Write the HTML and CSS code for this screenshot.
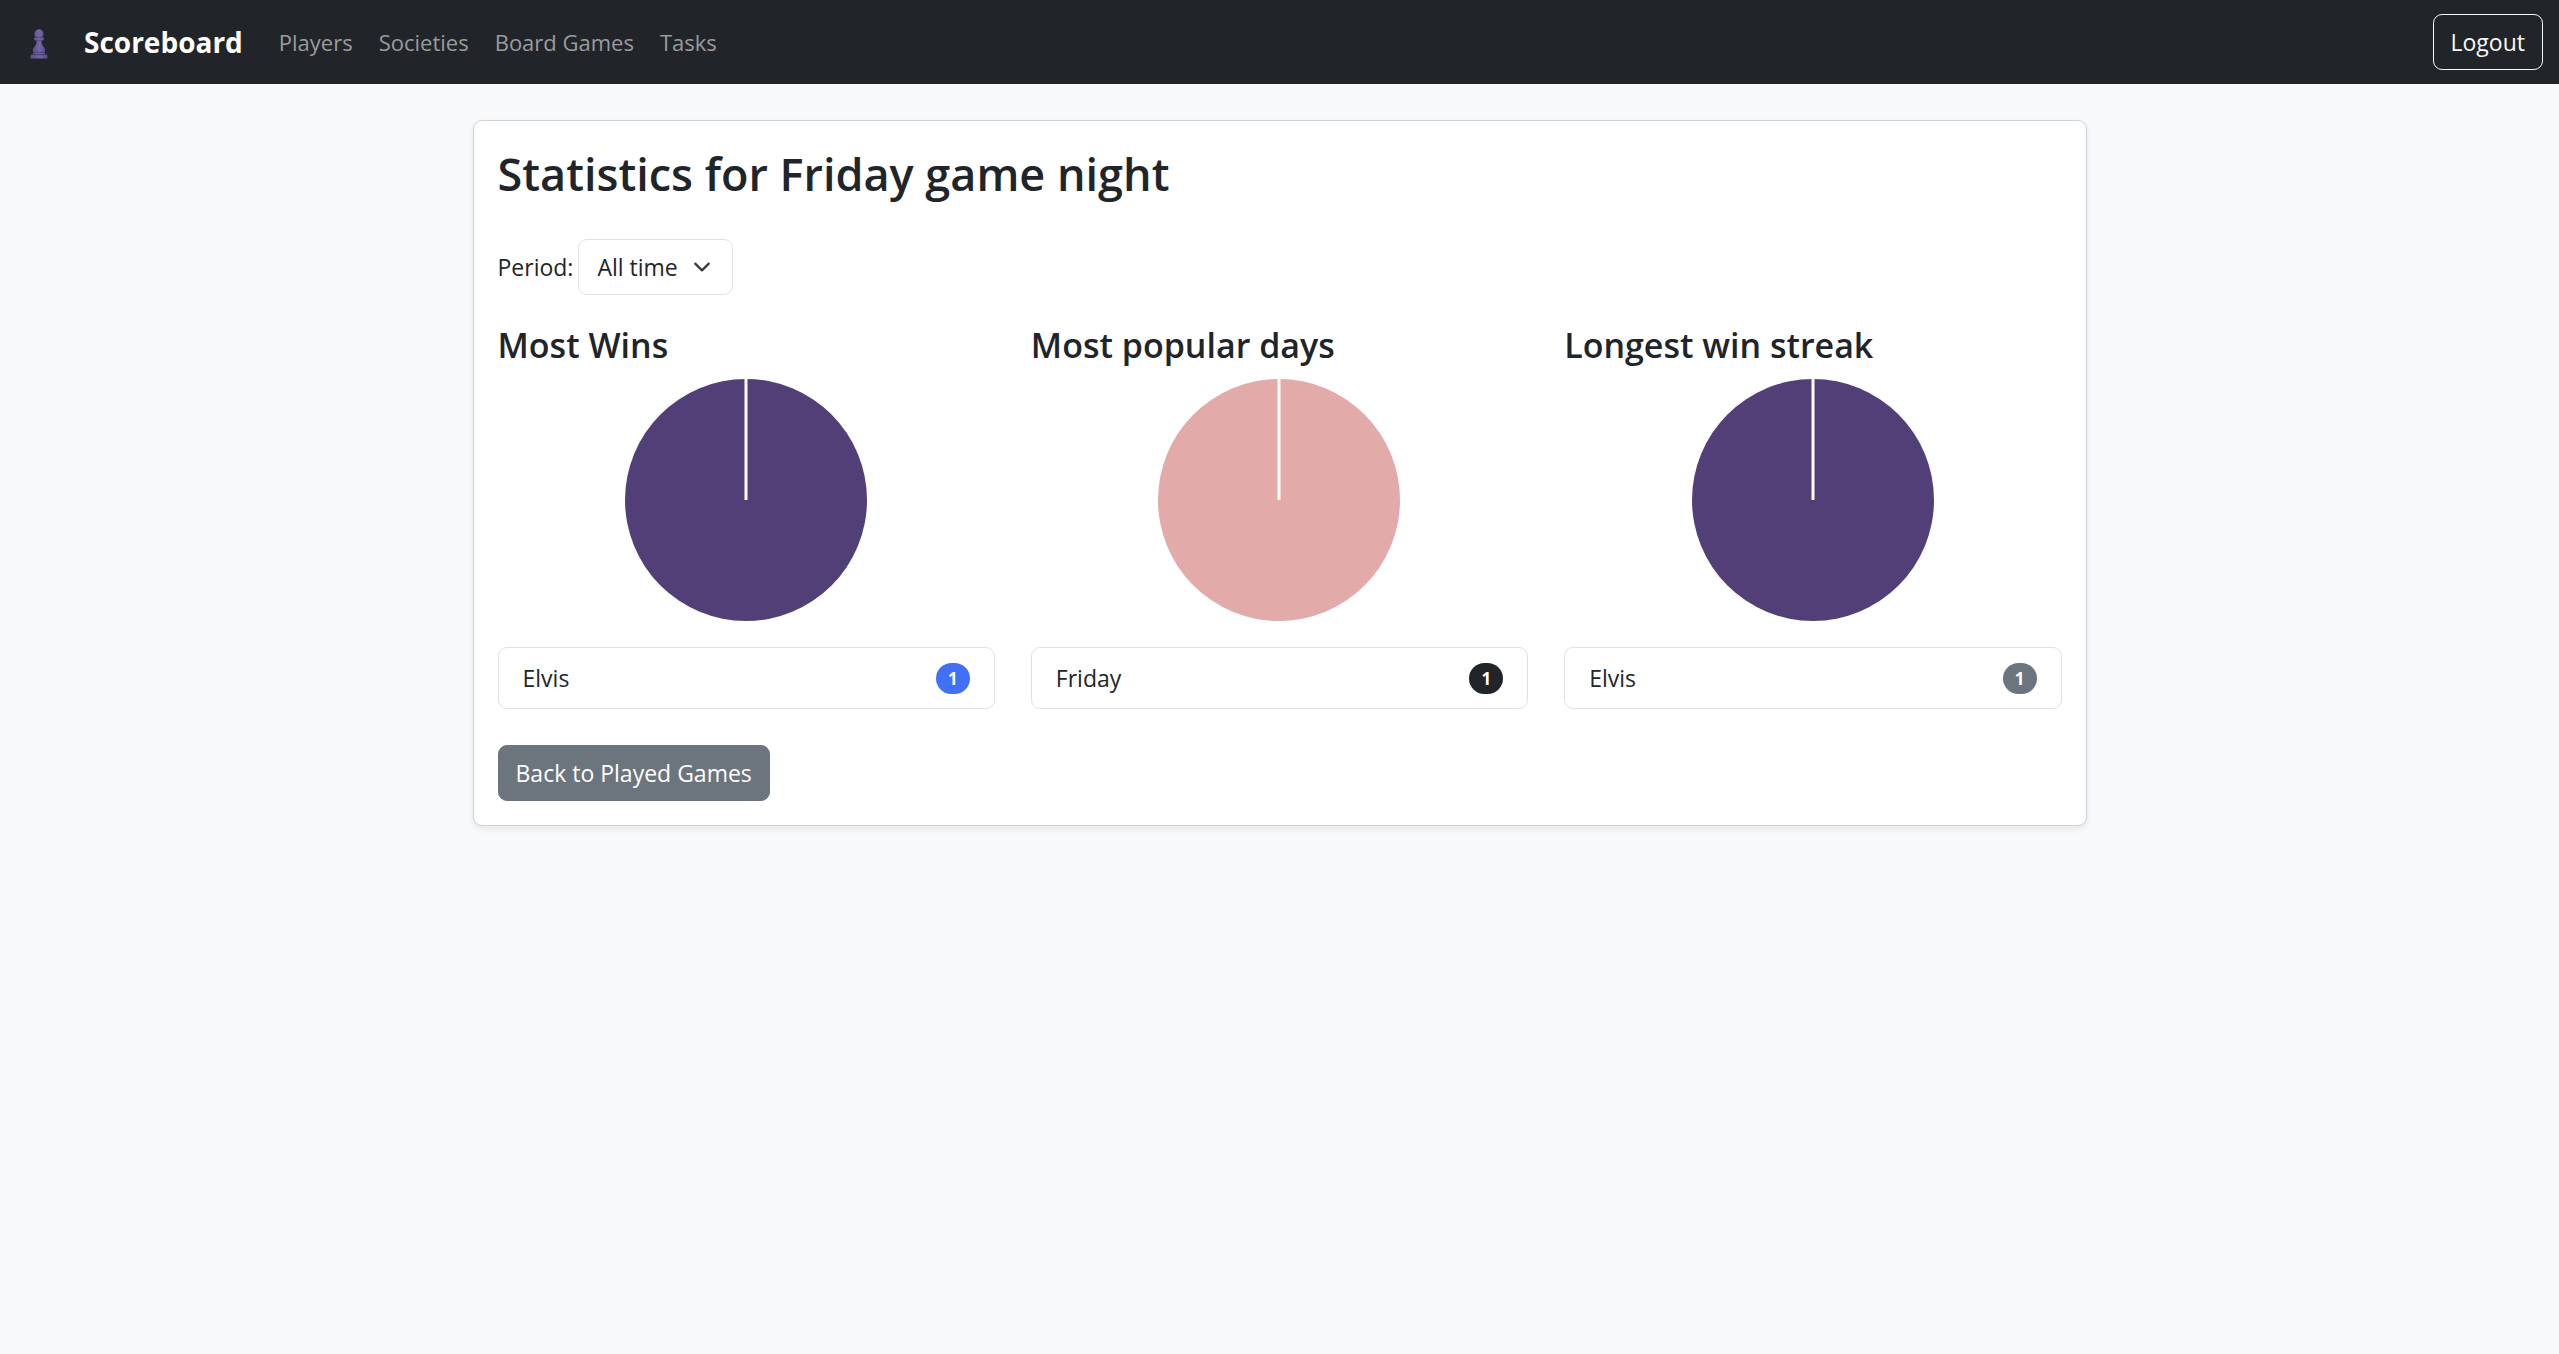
FILE: index.html
```html
<!DOCTYPE html>
<html lang="en">
<head>
<meta charset="utf-8">
<meta name="viewport" content="width=device-width, initial-scale=1">
<title>Scoreboard</title>
<link rel="stylesheet" href="styles.css">
</head>
<body>
<header class="navbar">
  <a class="logo" href="#" aria-label="Home">
    <svg width="18" height="30" viewBox="0 0 18 30" aria-hidden="true">
      <defs>
        <linearGradient id="pawn" x1="0" y1="0" x2="1" y2="0">
          <stop offset="0" stop-color="#5a4e88"/>
          <stop offset=".55" stop-color="#7367a8"/>
          <stop offset="1" stop-color="#564b84"/>
        </linearGradient>
      </defs>
      <g fill="url(#pawn)">
        <path d="M6 8.300A4.600 4.600 0 1 1 12 8.300L13 8.300Q14 8.500 14 9.800Q14 11.300 13 11.500L11.600 11.500C11.400 14 12 16 13.300 17.500C15 19.200 15.500 20.700 15.200 22L14.600 23.600L15.400 25.500H2.600L3.400 23.600L2.800 22C2.500 20.700 3 19.200 4.700 17.500C6 16 6.600 14 6.400 11.500L5 11.500Q4 11.300 4 9.800Q4 8.500 5 8.300Z"/>
        <path d="M1.500 25.500H16.500L17.500 26.500V29.500H.5V26.500Z"/>
      </g>
      <path d="M6 8.400H12M6.400 11.700H11.600M3.500 23.400H14.500M2 25.700H16" stroke="#453b70" stroke-width=".7"/>
    </svg>
  </a>
  <a class="brand" href="#">Scoreboard</a>
  <nav class="links">
    <a href="#">Players</a>
    <a href="#">Societies</a>
    <a href="#">Board Games</a>
    <a href="#">Tasks</a>
  </nav>
  <button class="btn btn-outline" type="button">Logout</button>
</header>

<main class="card">
  <h1>Statistics for Friday game night</h1>
  <form class="period">
    <label for="period">Period:</label>
    <select id="period">
      <option>All time</option>
    </select>
  </form>
  <div class="stats">
    <section class="stat">
      <h2>Most Wins</h2>
      <svg class="pie pie-purple" viewBox="0 0 242 242" role="img" aria-label="Elvis: 1"><circle cx="121" cy="121" r="121"/><path d="M121 0V121"/></svg>
      <ul class="list"><li>Elvis <span class="badge badge-blue">1</span></li></ul>
    </section>
    <section class="stat">
      <h2>Most popular days</h2>
      <svg class="pie pie-pink" viewBox="0 0 242 242" role="img" aria-label="Friday: 1"><circle cx="121" cy="121" r="121"/><path d="M121 0V121"/></svg>
      <ul class="list"><li>Friday <span class="badge badge-dark">1</span></li></ul>
    </section>
    <section class="stat">
      <h2>Longest win streak</h2>
      <svg class="pie pie-purple" viewBox="0 0 242 242" role="img" aria-label="Elvis: 1"><circle cx="121" cy="121" r="121"/><path d="M121 0V121"/></svg>
      <ul class="list"><li>Elvis <span class="badge badge-gray">1</span></li></ul>
    </section>
  </div>
  <a class="btn btn-secondary" href="#">Back to Played Games</a>
</main>
</body>
</html>
```
FILE: styles.css
```css
* { box-sizing: border-box; }

body {
  margin: 0;
  background: #f8f9fa;
  color: #212529;
  font: 23px/36px "Open Sans", "Noto Sans", sans-serif;
}

h1, h2, ul { margin: 0; padding: 0; }
a { color: inherit; text-decoration: none; }

.navbar {
  display: flex;
  align-items: center;
  padding: 14px 16px;
  background: #212529;
}

.logo { display: flex; padding: 4px 36px 0 14px; }

.brand {
  color: #fff;
  font-size: 28px;
  font-weight: 700;
}

.links {
  display: flex;
  flex: 1;
  gap: 26px;
  padding-left: 36px;
  color: #999b9d;
  font-size: 22px;
}

.btn {
  display: inline-block;
  padding: 9px 17px;
  border: 1px solid transparent;
  border-radius: 9px;
  color: #fff;
  font: inherit;
}

.btn-outline { border-color: #f8f9fa; background: transparent; color: #f8f9fa; }
.btn-secondary { border-color: #6c757d; background: #6c757d; }

.card {
  max-width: 1614px;
  margin: 36px auto;
  padding: 24px;
  border: 1px solid #d0d1d2;
  border-radius: 9px;
  background: #fff;
  box-shadow: 0 3px 6px rgba(0, 0, 0, .075);
}

h1 {
  margin-bottom: 36px;
  font-size: 45px;
  font-weight: 600;
  line-height: 58px;
}

.period {
  display: flex;
  align-items: center;
  gap: 5px;
  margin-bottom: 28px;
}

select {
  height: 56px;
  padding: 0 54px 0 18px;
  border: 1px solid #dee2e6;
  border-radius: 9px;
  appearance: none;
  background: #fff url("data:image/svg+xml,%3Csvg xmlns='http://www.w3.org/2000/svg' viewBox='0 0 16 16'%3E%3Cpath fill='none' stroke='%23343a40' stroke-linecap='round' stroke-linejoin='round' stroke-width='2' d='m2 5 6 6 6-6'/%3E%3C/svg%3E") no-repeat right 21px center / 18px 18px;
  color: inherit;
  font: inherit;
}

.stats {
  display: grid;
  grid-template-columns: repeat(3, 1fr);
  gap: 36px;
  margin-bottom: 36px;
}

h2 {
  margin-bottom: 12px;
  font-size: 34px;
  font-weight: 600;
  line-height: 44px;
}

.pie {
  display: block;
  width: 242px;
  margin: 0 auto 26px;
  stroke: #fff;
  stroke-width: 3;
}

.pie circle { stroke: none; }
.pie-purple { fill: #523f77; }
.pie-pink { fill: #e2aaa9; }

.list {
  border: 1px solid #dee2e6;
  border-radius: 9px;
  list-style: none;
}

.list li {
  display: flex;
  justify-content: space-between;
  align-items: center;
  padding: 12px 24px;
}

.badge {
  padding: 0 12px;
  border-radius: 18px;
  color: #fff;
  font-size: 17px;
  font-weight: 700;
  line-height: 31px;
}

.badge-blue { background: #4270f5; }
.badge-dark { background: #212529; }
.badge-gray { background: #6c757d; }
```
